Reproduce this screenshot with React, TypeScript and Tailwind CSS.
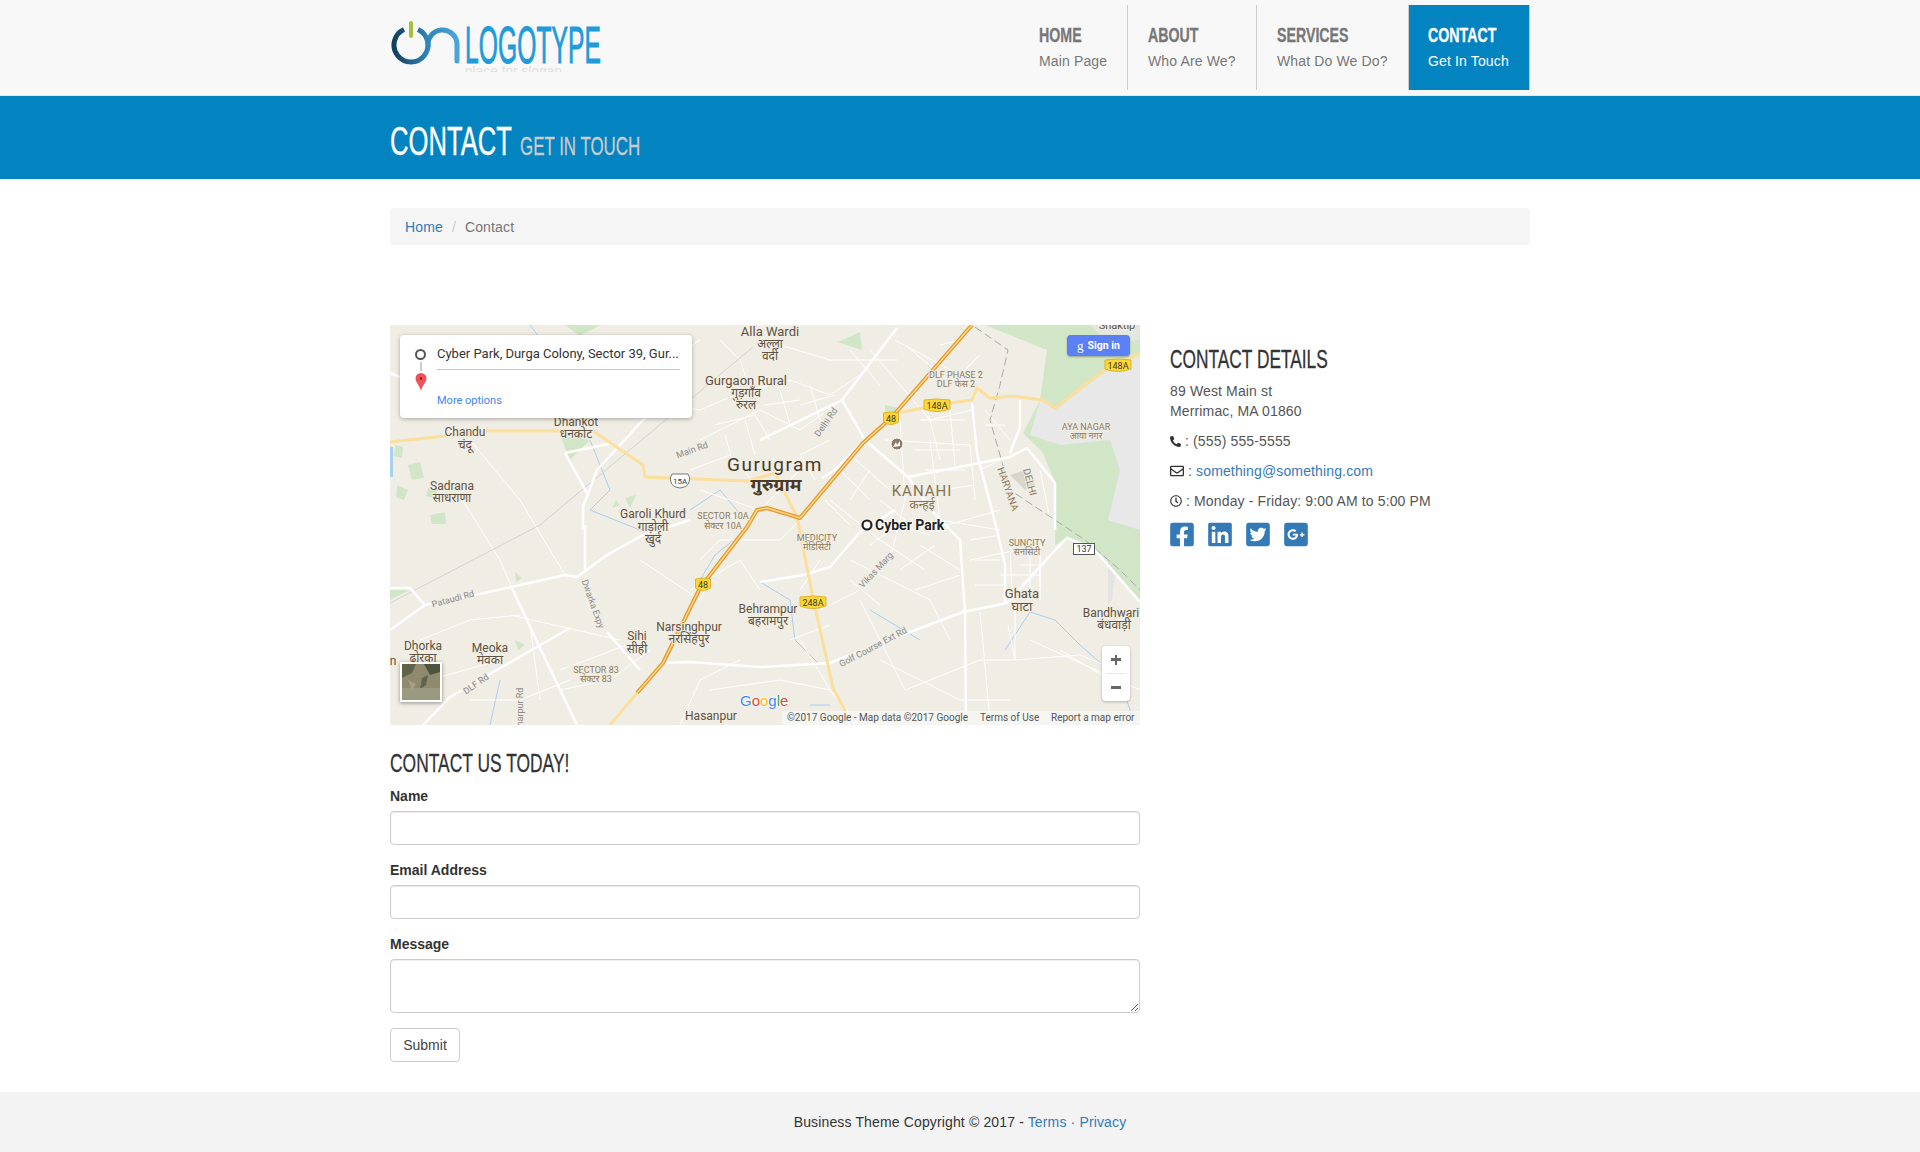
import { FaPhoneAlt, FaRegEnvelope, FaRegClock, FaFacebookSquare, FaLinkedin, FaTwitterSquare, FaGooglePlusSquare } from "react-icons/fa";

type Lbl = { x: number; y: number; t: string; s?: number; c?: string; r?: number; b?: boolean; ls?: number };

// labels are in page coordinates, the svg viewBox starts at the map's corner
const labels: Lbl[] = [
  { x: 770, y: 331, t: "Alla Wardi", s: 13 }, { x: 770, y: 344, t: "अल्ला", s: 12 }, { x: 770, y: 356, t: "वर्दी", s: 12 },
  { x: 746, y: 380, t: "Gurgaon Rural", s: 13 }, { x: 746, y: 393, t: "गुड़गाँव", s: 12 }, { x: 746, y: 405, t: "रुरल", s: 12 },
  { x: 576, y: 422, t: "Dhankot" }, { x: 576, y: 434, t: "धनकोट" },
  { x: 465, y: 432, t: "Chandu" }, { x: 465, y: 445, t: "चंदू" },
  { x: 452, y: 486, t: "Sadrana" }, { x: 452, y: 498, t: "साधराणा" },
  { x: 653, y: 514, t: "Garoli Khurd" }, { x: 653, y: 527, t: "गाड़ोली" }, { x: 653, y: 539, t: "खुर्द" },
  { x: 723, y: 516, t: "SECTOR 10A", s: 9, c: "#8c7a5c" }, { x: 723, y: 526, t: "सेक्टर 10A", s: 9, c: "#8c7a5c" },
  { x: 692, y: 450, t: "Main Rd", s: 9, c: "#8a8a8a", r: -20 },
  { x: 775, y: 464, t: "Gurugram", s: 19, c: "#4a3b28", ls: 1.5 }, { x: 776, y: 484, t: "गुरुग्राम", s: 18, c: "#4a3b28", b: true },
  { x: 956, y: 375, t: "DLF PHASE 2", s: 9, c: "#8c7a5c" }, { x: 956, y: 384, t: "DLF फेस 2", s: 9, c: "#8c7a5c" },
  { x: 826, y: 422, t: "Delhi Rd", s: 9, c: "#8a8a8a", r: -55 },
  { x: 1086, y: 427, t: "AYA NAGAR", s: 9, c: "#8c7a5c" }, { x: 1086, y: 436, t: "आया नगर", s: 9, c: "#8c7a5c" },
  { x: 922, y: 491, t: "KANAHI", s: 15, c: "#85734f", ls: 1 }, { x: 922, y: 505, t: "कन्हई", s: 12, c: "#85734f" },
  { x: 1008, y: 489, t: "HARYANA", s: 10, c: "#8c7a5c", r: 70 }, { x: 1030, y: 482, t: "DELHI", s: 10, c: "#8c7a5c", r: 75 },
  { x: 1117, y: 325, t: "Shaktip", s: 11 },
  { x: 817, y: 538, t: "MEDICITY", s: 9, c: "#8c7a5c" }, { x: 817, y: 547, t: "मेडिसिटी", s: 9, c: "#8c7a5c" },
  { x: 1027, y: 543, t: "SUNCITY", s: 9, c: "#8c7a5c" }, { x: 1027, y: 552, t: "सनसिटी", s: 9, c: "#8c7a5c" },
  { x: 1022, y: 593, t: "Ghata", s: 13 }, { x: 1022, y: 606, t: "घाटा", s: 13 },
  { x: 1111, y: 613, t: "Bandhwari" }, { x: 1114, y: 625, t: "बंधवाड़ी" },
  { x: 876, y: 570, t: "Vikas Marg", s: 9, c: "#8a8a8a", r: -47 },
  { x: 873, y: 647, t: "Golf Course Ext Rd", s: 9, c: "#8a8a8a", r: -28 },
  { x: 768, y: 609, t: "Behrampur" }, { x: 768, y: 621, t: "बहरामपुर" },
  { x: 689, y: 627, t: "Narsinghpur" }, { x: 689, y: 639, t: "नरसिंहपुर" },
  { x: 637, y: 636, t: "Sihi" }, { x: 637, y: 649, t: "सीही" },
  { x: 593, y: 604, t: "Dwarka Expy", s: 9, c: "#8a8a8a", r: 70 },
  { x: 596, y: 670, t: "SECTOR 83", s: 9, c: "#8c7a5c" }, { x: 596, y: 679, t: "सेक्टर 83", s: 9, c: "#8c7a5c" },
  { x: 490, y: 648, t: "Meoka" }, { x: 490, y: 660, t: "मेवका" },
  { x: 423, y: 646, t: "Dhorka" }, { x: 423, y: 658, t: "ढोरका" },
  { x: 453, y: 599, t: "Pataudi Rd", s: 9, c: "#8a8a8a", r: -15 },
  { x: 476, y: 684, t: "DLF Rd", s: 9, c: "#8a8a8a", r: -35 },
  { x: 520, y: 707, t: "harpur Rd", s: 9, c: "#8a8a8a", r: -90 },
  { x: 711, y: 716, t: "Hasanpur" }, { x: 393, y: 661, t: "n" },
];

const majorRoads = [
  "897,328 842,400 865,440 908,477 933,512 960,540 965,612 966,725",
  "908,477 1010,457 1027,448 1055,483 1055,530",
  "972,403 977,453 997,530 1005,565 1005,602",
  "1020,400 1020,427 1010,453",
  "760,667 830,663 910,632 963,612 1007,603 1057,548 1067,538 1093,548 1140,602",
  "760,582 803,575 830,567 860,532 895,510",
  "390,630 425,605 410,588 390,588",
  "425,605 475,595 565,575 577,577 607,555 643,535 690,520",
  "585,525 585,570",
  "597,470 583,507 583,530",
  "597,470 643,420 680,385",
  "512,588 540,648 577,725",
  "607,632 640,670",
  "663,663 690,662 760,667",
  "423,725 450,697 570,628",
  "565,453 587,493",
  "565,453 613,443",
  "390,373 400,377",
  "842,400 760,440",
  "865,440 835,470 822,478",
];

const minorRoads = [
  "700,440 760,410 800,430 842,400", "690,470 730,455 760,490", "700,490 760,510 800,470",
  "750,390 790,380 830,395 860,375", "780,345 830,360 897,360", "870,350 930,420 972,410",
  "885,440 970,445 975,500", "900,420 905,500 890,560", "930,440 940,520 1000,530",
  "930,530 1000,510", "850,560 930,600 950,640", "830,500 880,540 925,570", "860,600 905,690",
  "905,690 980,660 1015,660 1015,600", "980,612 990,720", "1015,660 1080,655 1105,665",
  "970,560 1040,545 1040,590", "1000,575 1040,575", "1040,545 1040,600", "1010,540 1012,600",
  "700,560 720,540 780,540 810,510", "690,590 740,560 760,590", "640,560 700,600 720,560",
  "710,690 780,680 830,690", "800,640 830,690 860,725", "680,725 700,680 740,660",
  "450,480 500,560 512,588", "470,440 520,500 565,575", "510,615 620,640", "420,640 470,620 520,615",
  "530,625 540,700", "560,670 640,640", "560,690 610,680 650,650", "470,700 520,700 570,680",
  "640,400 700,410 735,395", "720,340 740,360 750,390", "640,380 700,340",
  "895,340 960,375 980,355", "1030,640 1140,690", "1060,650 1110,680",
  "880,660 960,700 1010,700", "800,590 820,560", "430,680 500,660",
  // the dense blocks round the city centre
  "715,425 755,415 770,440", "725,435 735,470", "745,420 755,455", "765,405 800,400", "780,390 790,425",
  "810,385 820,420", "800,405 835,395", "850,350 880,385", "830,440 800,455 815,480",
  "840,470 870,500", "850,455 890,490", "870,470 850,500", "825,500 850,525", "880,500 905,520",
  "920,420 965,420", "915,450 960,450", "925,400 940,460", "950,410 955,465", "925,470 965,470",
  "940,490 975,485", "985,425 1005,425", "985,410 1010,440", "980,470 1000,460",
  "880,520 930,535", "870,545 905,520", "920,545 960,570", "900,570 935,545", "915,590 960,575",
  "975,560 1000,560", "975,585 1005,585", "970,540 1000,535", "1020,565 1045,565", "1030,548 1030,600",
  "1008,625 1015,660", "850,580 880,605", "820,610 860,590", "790,640 830,625",
  "850,390 870,365", "905,345 935,370", "940,345 960,340", "1040,470 1050,520",
];

const rivers = [
  "530,325 545,345 570,345", "590,440 610,490 590,510", "590,510 640,530 670,525",
  "690,510 720,490 745,520", "700,580 715,555 740,535", "500,680 490,725",
  "760,582 790,600 795,640 820,665", "1005,650 1030,612 1055,620 1080,645 1120,680 1135,725",
  "810,705 830,705", "870,610 920,640",
];

const greenPatches = [
  "565,325 600,325 580,336", "560,435 590,440 570,460", "838,342 860,332 862,350", "885,405 900,408 895,418 885,418",
  "390,590 410,590 390,600", "395,445 403,447 402,458 394,456", "408,465 420,462 424,478 412,480",
  "397,485 408,490 404,500 396,497", "428,488 438,490 434,498 426,496", "430,515 445,512 446,524 432,524",
  "625,498 636,495 630,508", "620,505 612,508 616,500", "515,640 525,645 518,650", "515,572 522,578 516,582",
];

const hw48 = "972,325 892,417 863,443 800,518 767,508 757,510 747,527 700,588 663,663 637,693";
const shields: [number, number, string, number][] = [[891, 419, "48", 15], [937, 406, "148A", 26], [1118, 366, "148A", 26], [703, 585, "48", 15], [813, 603, "248A", 26]];

function Oswald({ w, scale, className, children }: { w: number; scale: string; className: string; children: string }) {
  // Oswald isn't installed: squeeze the narrow face horizontally, box keeps the real width
  return (
    <span className="inline-block whitespace-nowrap" style={{ width: w }}>
      <span className={`inline-block origin-left font-['Liberation_Sans_Narrow','Liberation_Sans',sans-serif] tracking-normal ${scale} ${className}`}>{children}</span>
    </span>
  );
}

function MapCanvas() {
  return (
    <svg viewBox="390 325 750 400" width={750} height={400} className="block font-[Roboto,sans-serif] tracking-normal">
      <rect x="390" y="325" width="750" height="400" fill="#f0ede5" />
      <polygon points="985,325 1140,325 1140,602 1093,548 1067,538 1055,545 1056,485 1043,453 1023,433 1040,400 1047,350" fill="#d0e6c6" />
      <polygon points="1040,400 1055,410 1105,372 1140,355 1140,460 1110,440 1060,445 1030,435" fill="#e8e8e8" />
      <polygon points="1110,440 1140,440 1140,530 1108,520 1120,470" fill="#e8e8e8" />
      <polygon points="1095,550 1115,575 1112,600 1108,605 1108,560" fill="#e4e4e4" />
      <polygon points="1035,325 1090,325 1110,345 1140,340 1140,325" fill="#e3e8de" />
      <polygon points="1010,475 1025,470 1035,485 1025,490" fill="#d8d5cd" />
      <polygon points="390,447 393,447 393,477 390,477" fill="#a8d0f0" />
      {greenPatches.map((p) => <polygon key={p} points={p} fill="#d0e6c6" />)}
      {rivers.map((d) => <polyline key={d} points={d} fill="none" stroke="#a9cdf2" strokeWidth="1" />)}
      {minorRoads.map((d) => <polyline key={d} points={d} fill="none" stroke="#ffffff" strokeWidth="1" />)}
      <polyline points="390,603 540,525 753,347" fill="none" stroke="#d2d2d2" strokeWidth="1" />
      <polyline points="975,327 1008,350 1000,385 990,420 1010,490 1040,510 1085,540 1120,570 1140,590" fill="none" stroke="#aaaaaa" strokeWidth="1" strokeDasharray="8 4" />
      {majorRoads.map((d) => <polyline key={d} points={d} fill="none" stroke="#ffffff" strokeWidth="2.5" strokeLinejoin="round" />)}
      <g fill="none" stroke="#fbdf9b" strokeWidth="3" strokeLinejoin="round">
        <polyline points="390,442 445,436 487,431 593,431 643,465 645,477 747,481 775,473 797,517 813,598 833,688 853,725" />
        <polyline points="898,413 937,405 972,400 977,388 990,398 1013,396 1043,400 1055,408 1107,368 1140,353" />
        <polyline points="637,693 610,725" />
      </g>
      <polyline points={hw48} fill="none" stroke="#e59a2c" strokeWidth="4" strokeLinejoin="round" />
      <polyline points={hw48} fill="none" stroke="#fbd486" strokeWidth="1.5" strokeLinejoin="round" />
      {labels.map((l) => (
        <text
          key={l.t + l.x}
          x={l.x}
          y={l.y}
          fontSize={l.s ?? 12}
          fontWeight={l.b ? 700 : 400}
          letterSpacing={l.ls}
          fill={l.c ?? "#5f5240"}
          stroke="#f0ede5"
          strokeWidth="2"
          paintOrder="stroke"
          textAnchor="middle"
          dominantBaseline="central"
          transform={l.r ? `rotate(${l.r} ${l.x} ${l.y})` : undefined}
          fontFamily="Roboto, 'Noto Sans', sans-serif"
        >
          {l.t}
        </text>
      ))}
      {shields.map(([x, y, t, w]) => (
        <g key={t + x}>
          <path d={`M${x - w / 2} ${y - 6} q${w / 2} -2 ${w} 0 v9 q-${w / 2} 5 -${w} 0 z`} fill="#fdd835" stroke="#d9a520" strokeWidth="0.8" />
          <text x={x} y={y} fontSize="9" fill="#3a3a2a" textAnchor="middle" dominantBaseline="central">{t}</text>
        </g>
      ))}
      <path d="M672 474 h16 q3 4 1 8 q-1 5 -9 6 q-8 -1 -9 -6 q-2 -4 1 -8 z" fill="#fff" stroke="#555" strokeWidth="0.8" />
      <text x="680" y="481" fontSize="8" fill="#333" textAnchor="middle" dominantBaseline="central">15A</text>
      <rect x="1073.5" y="543.5" width="21" height="11" fill="#fff" stroke="#555" />
      <text x="1084" y="549" fontSize="9" fill="#333" textAnchor="middle" dominantBaseline="central">137</text>
      <circle cx="897" cy="444" r="6" fill="#8d7a66" stroke="#fff" strokeWidth="1" />
      <path d="M893 447 l3 -5 l1 3 l3 -4 v5 z" fill="#fff" />
      <circle cx="867" cy="525" r="4.5" fill="#fff" stroke="#222" strokeWidth="2.2" />
      <text x="875" y="525" fontSize="14" fontWeight="700" fill="#222" stroke="#fff" strokeWidth="2" paintOrder="stroke" dominantBaseline="central">Cyber Park</text>
      <text x="740" y="700" fontSize="15" fontFamily="'Liberation Sans', sans-serif" dominantBaseline="central" stroke="#fff" strokeWidth="1.5" paintOrder="stroke">
        <tspan fill="#4285f4">G</tspan><tspan fill="#ea4335">o</tspan><tspan fill="#fbbc05">o</tspan><tspan fill="#4285f4">g</tspan><tspan fill="#34a853">l</tspan><tspan fill="#ea4335">e</tspan>
      </text>
    </svg>
  );
}

function Logo() {
  return (
    <svg viewBox="390 0 220 96" width={220} height={96} className="block">
      <defs>
        <linearGradient id="ring" x1="0" x2="1" y1="0" y2="0">
          <stop offset="0" stopColor="#123f5e" />
          <stop offset="1" stopColor="#2f86bb" />
        </linearGradient>
        <linearGradient id="arch" x1="0" x2="1" y1="0" y2="0">
          <stop offset="0" stopColor="#2f86bb" />
          <stop offset="1" stopColor="#4aa5da" />
        </linearGradient>
      </defs>
      <path d="M404 29.5 A17 17 0 1 0 418 29.5" fill="none" stroke="url(#ring)" strokeWidth="5" />
      <path d="M428 46 A14.5 14.5 0 0 1 457 43 V61" fill="none" stroke="url(#arch)" strokeWidth="5" strokeLinecap="round" />
      <line x1="411" y1="23" x2="411" y2="36" stroke="#a3c13a" strokeWidth="4" strokeLinecap="round" />
      <text x="465" y="63" fontSize="51" fill="#1f9bdc" stroke="#1f9bdc" strokeWidth="1" textLength="136" lengthAdjust="spacingAndGlyphs" fontFamily="'Liberation Sans Narrow','Liberation Sans',sans-serif">LOGOTYPE</text>
      <svg x="465" y="66" width="98" height="6" viewBox="465 66 98 6">
        <text x="465" y="76" fontSize="15" fill="#e0e0e0" textLength="97" lengthAdjust="spacingAndGlyphs" fontFamily="'Liberation Sans',sans-serif">place for slogan</text>
      </svg>
    </svg>
  );
}

function NavItem({ title, sub, w, tw, active, last }: { title: string; sub: string; w: number; tw: number; active?: boolean; last?: boolean }) {
  return (
    <a
      className={`flex h-[85px] flex-col pt-[15px] ${active ? "bg-[#0483c1] border-x border-[#cccccc] pl-[19px] text-white" : "pl-5 text-[#777777]"} ${!active && !last ? "border-r border-[#cccccc]" : ""}`}
      style={{ width: w }}
    >
      <Oswald w={tw} scale="scale-x-[0.71]" className="text-[20px] leading-[30px] font-bold [-webkit-text-stroke:0.3px]">{title}</Oswald>
      <span className="mt-[1px] text-[14px] leading-[20px] whitespace-nowrap">{sub}</span>
    </a>
  );
}

export default function App() {
  return (
    <div className="min-h-[1152px] bg-white font-['Liberation_Sans',Arial,sans-serif] text-[14px] leading-[20px] tracking-[0.14px] text-[#333333]">
      <header className="h-[96px] border-b border-[#e7e7e7] bg-[#f8f8f8]">
        <div className="mx-auto flex w-[1140px] justify-between">
          <Logo />
          <nav className="flex pt-[5px]">
            <NavItem title="HOME" sub="Main Page" w={109} tw={42} />
            <NavItem title="ABOUT" sub="Who Are We?" w={129} tw={50} />
            <NavItem title="SERVICES" sub="What Do We Do?" w={151} tw={70} last />
            <NavItem title="CONTACT" sub="Get In Touch" w={122} tw={67} active />
          </nav>
        </div>
      </header>

      <div className="h-[83px] bg-[#0483c1]">
        <div className="mx-auto flex w-[1140px] items-baseline pt-[23px] text-white">
          <Oswald w={130} scale="scale-x-[0.64]" className="text-[40px] leading-[44px] [-webkit-text-stroke:0.4px]">CONTACT</Oswald>
          <Oswald w={120} scale="scale-x-[0.65]" className="text-[26px] leading-[26px] text-[#cccccc] [-webkit-text-stroke:0.3px]">GET IN TOUCH</Oswald>
        </div>
      </div>

      <div className="mx-auto w-[1140px]">
        <ol className="mt-[29px] flex h-[37px] items-center rounded bg-[#f5f5f5] px-[15px]">
          <li className="text-[#337ab7]">Home</li>
          <li className="px-[9px] text-[#cccccc]">/</li>
          <li className="text-[#777777]">Contact</li>
        </ol>

        <div className="mt-[80px] flex gap-[30px]">
          <div className="w-[750px]">
            <div className="relative mb-[25px] h-[400px] w-[750px] overflow-hidden tracking-normal">
              <MapCanvas />
              <div className="absolute left-[10px] top-[10px] h-[83px] w-[292px] rounded-sm bg-white font-[Roboto,sans-serif] shadow-[0_1px_4px_rgba(0,0,0,0.3)]">
                <div className="absolute left-[15px] top-[14px] h-[11px] w-[11px] rounded-full border-[2.5px] border-[#555555]" />
                <div className="absolute left-[20px] top-[27px] h-[9px] w-[2px] bg-[#cccccc]" />
                <svg viewBox="0 0 12 18" className="absolute left-[15px] top-[38px] h-[18px] w-[12px]">
                  <path d="M6 18 C5 13 0.5 9 0.5 5.5 a5.5 5.5 0 0 1 11 0 C11.5 9 7 13 6 18z" fill="#f0525a" />
                  <circle cx="6" cy="5.5" r="1.2" fill="#7a1c20" />
                </svg>
                <div className="absolute left-[37px] top-[9px] w-[243px] whitespace-nowrap text-[13px] leading-[20px] text-[#333333]">Cyber Park, Durga Colony, Sector 39, Gur...</div>
                <div className="absolute left-[37px] top-[34px] h-px w-[243px] bg-[#c8c8c8]" />
                <div className="absolute left-[37px] top-[57px] text-[11px] leading-[18px] text-[#4285f4]">More options</div>
              </div>
              <div className="absolute left-[677px] top-[10px] flex h-[21px] w-[63px] items-center justify-center gap-1 rounded-sm bg-[#5b7ff5] font-[Roboto,sans-serif] text-[10.5px] font-bold text-white shadow-[0_1px_2px_rgba(0,0,0,0.3)]">
                <span className="font-['Liberation_Serif',serif] text-[13px] font-normal leading-none">g</span>
                <span>Sign in</span>
              </div>
              <div className="absolute left-[712px] top-[321px] flex h-[55px] w-[28px] flex-col rounded-sm bg-white shadow-[0_1px_3px_rgba(0,0,0,0.25)]">
                <div className="relative flex h-[27px] items-center justify-center">
                  <div className="h-[2.5px] w-[10px] bg-[#666666]" />
                  <div className="absolute h-[10px] w-[2.5px] bg-[#666666]" />
                </div>
                <div className="mx-1 h-px bg-[#e6e6e6]" />
                <div className="flex flex-1 items-center justify-center">
                  <div className="h-[2.5px] w-[10px] bg-[#666666]" />
                </div>
              </div>
              <div className="absolute left-[10px] top-[337px] h-[40px] w-[42px] border-2 border-white shadow-[0_1px_4px_rgba(0,0,0,0.4)]">
                <svg viewBox="0 0 38 36" className="block h-full w-full">
                  <rect width="38" height="36" fill="#8f8a6e" />
                  <path d="M0 0 h14 l-4 9 l-10 5z" fill="#5d6248" />
                  <path d="M22 0 h16 v8 l-10 3z" fill="#4e5340" />
                  <path d="M20 14 l6 -3 l-2 10 l-6 4z" fill="#5f6450" />
                  <path d="M0 24 h38 v12 h-38z" fill="#9a9a80" />
                  <path d="M6 16 l8 4 l-4 6z" fill="#a89f84" />
                </svg>
              </div>
              <div className="absolute bottom-0 right-0 flex h-[14px] items-center whitespace-nowrap bg-[#f5f5f2] font-[Roboto,sans-serif] text-[10px] text-[#555555]">
                <span className="w-[198px] pl-[5px]">©2017 Google - Map data ©2017 Google</span>
                <span className="w-[71px]">Terms of Use</span>
                <span className="w-[89px]">Report a map error</span>
              </div>
            </div>

            <h3 className="mb-[10px] h-[26px] leading-[26px] text-[#333333]">
              <Oswald w={179} scale="scale-x-[0.67]" className="text-[26px] leading-[26px] [-webkit-text-stroke:0.3px]">CONTACT US TODAY!</Oswald>
            </h3>
            <form>
              <label className="mb-[5px] block font-bold tracking-normal">Name</label>
              <input className="mb-[15px] block h-[34px] w-full rounded border border-[#cccccc] shadow-[inset_0_1px_1px_rgba(0,0,0,0.075)]" />
              <label className="mb-[5px] block font-bold tracking-normal">Email Address</label>
              <input className="mb-[15px] block h-[34px] w-full rounded border border-[#cccccc] shadow-[inset_0_1px_1px_rgba(0,0,0,0.075)]" />
              <label className="mb-[5px] block font-bold tracking-normal">Message</label>
              <textarea className="mb-[15px] block h-[54px] w-full rounded border border-[#cccccc] shadow-[inset_0_1px_1px_rgba(0,0,0,0.075)]" />
              <button type="button" className="h-[34px] w-[70px] rounded border border-[#cccccc] bg-white tracking-normal text-[#444444]">Submit</button>
            </form>
          </div>

          <aside className="w-[360px] pt-[21px]">
            <h3 className="mb-[9px] h-[26px] leading-[26px]">
              <Oswald w={157} scale="scale-x-[0.666]" className="text-[26px] leading-[26px] [-webkit-text-stroke:0.3px]">CONTACT DETAILS</Oswald>
            </h3>
            <p className="mb-[10px] text-[#555555]">89 West Main st<br />Merrimac, MA 01860</p>
            <p className="mb-[10px] flex items-center text-[#555555]">
              <FaPhoneAlt className="mr-[4px] h-[11px] w-[11px] text-[#333333]" />
              <span className="whitespace-pre">: (555) 555-5555</span>
            </p>
            <p className="mb-[10px] flex items-center text-[#555555]">
              <FaRegEnvelope className="mr-[4px] h-[14px] w-[14px] text-[#333333]" />
              <span className="whitespace-pre">: <span className="text-[#337ab7]">something@something.com</span></span>
            </p>
            <p className="mb-[10px] flex items-center text-[#555555]">
              <FaRegClock className="mr-[4px] h-[12px] w-[12px] text-[#333333]" />
              <span className="whitespace-pre">: Monday - Friday: 9:00 AM to 5:00 PM</span>
            </p>
            <div className="flex gap-[14px] text-[#337ab7]">
              <FaFacebookSquare className="h-[27px] w-[24px]" />
              <FaLinkedin className="h-[27px] w-[24px]" />
              <FaTwitterSquare className="h-[27px] w-[24px]" />
              <FaGooglePlusSquare className="h-[27px] w-[24px]" />
            </div>
          </aside>
        </div>
      </div>

      <footer className="mt-[30px] flex h-[60px] items-center justify-center bg-[#f3f3f3]">
        <span>Business Theme Copyright © 2017 - <span className="text-[#337ab7]">Terms</span> <span className="text-[#337ab7]">·</span> <span className="text-[#337ab7]">Privacy</span></span>
      </footer>
    </div>
  );
}
